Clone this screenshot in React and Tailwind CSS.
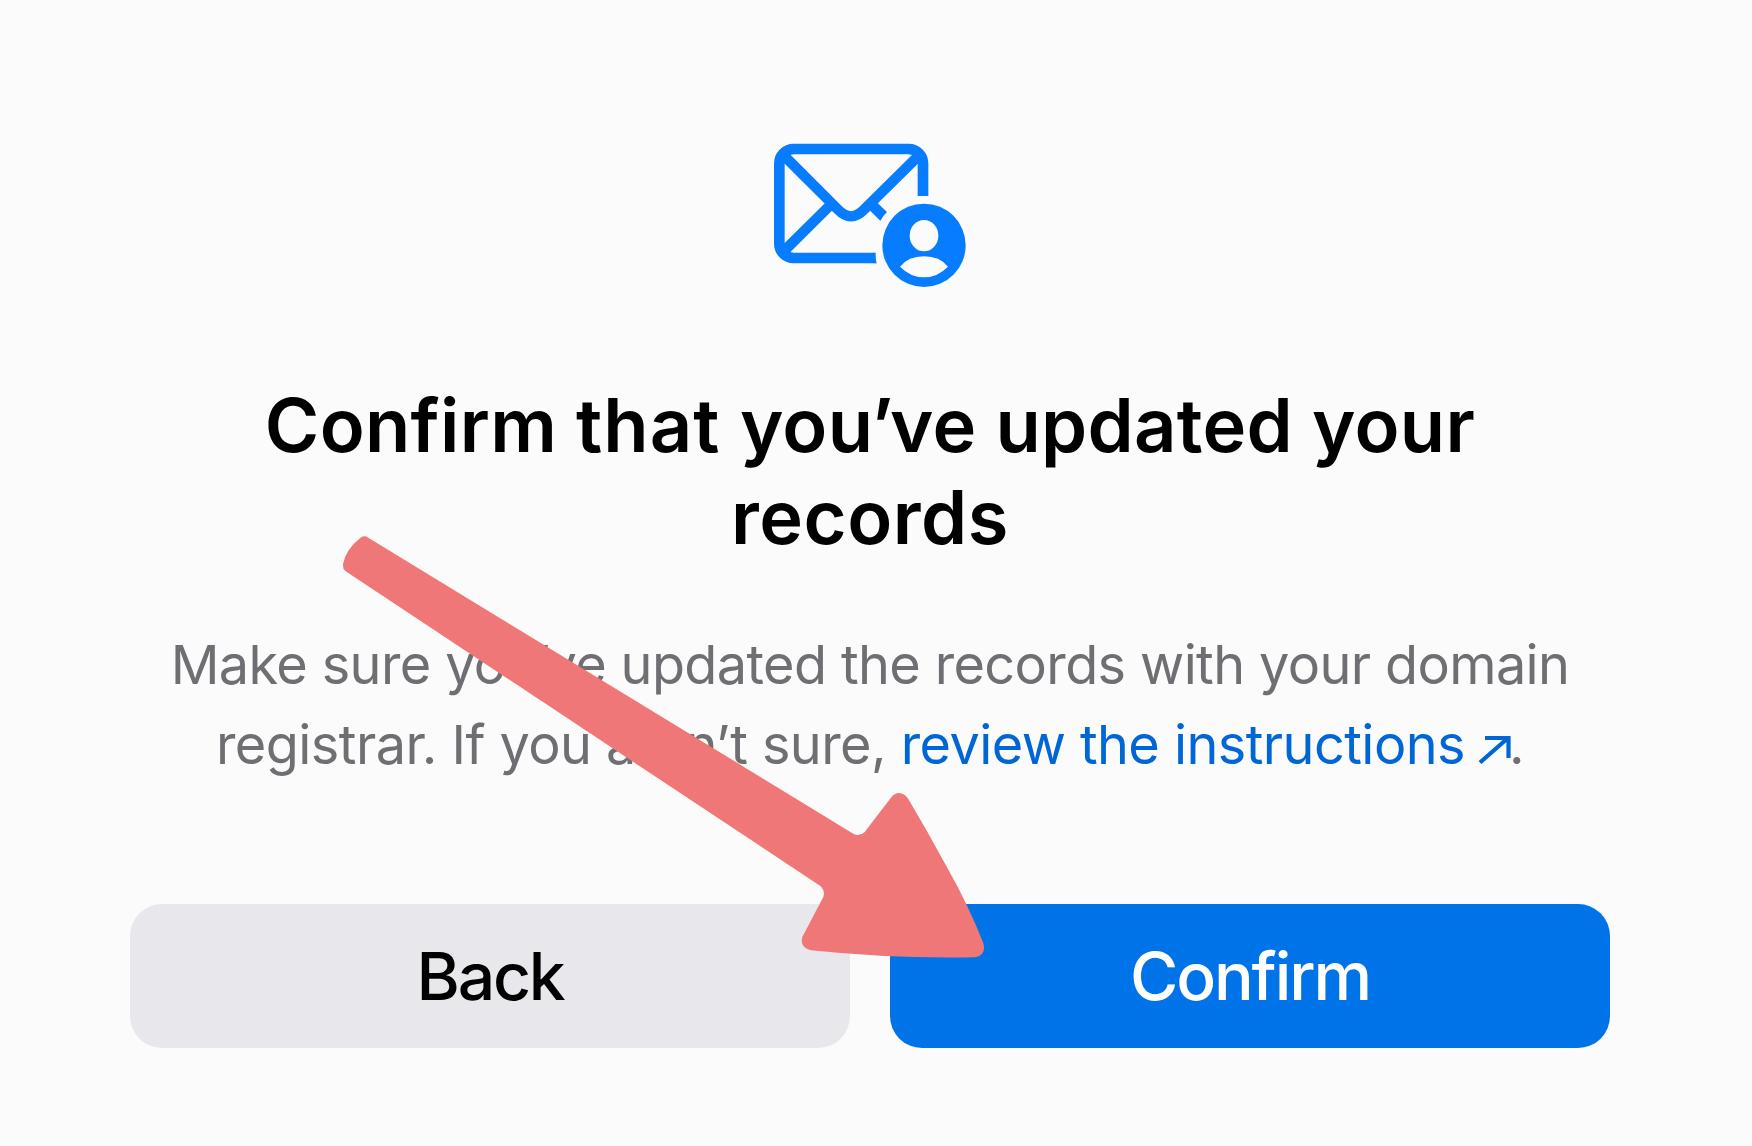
import React from 'react'

function MailUserIcon() {
    return (
        <svg className="w-[192px] h-[144px] text-[#087cff]" viewBox="42 40 576 432" fill="none" stroke="currentColor" strokeWidth={32}>
            <path d="M489 199V101a43 43 0 0 0-43-43H101a43 43 0 0 0-43 43v241a43 43 0 0 0 43 43h246" />
            <path d="M342 369l8 32h-10v-32z" fill="currentColor" stroke="none" />
            <path d="M76 82L234 240q39 40 78 0L472 82M78 358L207 230" strokeWidth={31} />
            <path d="M352 219l29 28q-12 12-20 26l-32-31z" fill="currentColor" stroke="none" />
            <circle cx="492" cy="347" r="125" fill="currentColor" stroke="none" />
            <ellipse cx="492" cy="318" rx="43" ry="47" fill="#fbfbfb" stroke="none" />
            <path d="M420 411Q445 380 492 380T564 411Q532 443 492 443T420 411z" fill="#fbfbfb" stroke="none" />
        </svg>
    )
}

function ExternalArrow() {
    return (
        <svg className="inline-block w-[34px] h-[30px] ml-[12px] mr-px align-baseline" viewBox="0 0 34 30" fill="none" stroke="currentColor" strokeWidth={4.2}>
            <path d="M8 4h23.5v20M31 4L3 28.5" />
        </svg>
    )
}

// Annotation arrow lying over the whole dialog
function PointerArrow() {
    return (
        <svg className="absolute left-0 top-0 w-[1752px] h-[1146px] pointer-events-none" viewBox="0 0 1752 1146">
            <path
                fill="#f07777"
                d="M368.3 537.7L853.3 833.7Q859 837 864.5 832.3L891.7 796.7Q895 793 899 793Q904.5 793.3 908 798.5Q928 832 946.7 866.7Q968 904 983.3 943Q986.5 955.5 975.5 957.2Q895 959 811 950.2Q799.5 947.5 802.3 937L823.3 897Q825.5 890.5 820 885.7L345.3 571Q342.7 569 343 564Q346 549 360.5 537.7Q364.5 534.8 368.3 537.7z"
            />
        </svg>
    )
}

export default function App() {
    return (
        <div className="relative w-full h-screen overflow-hidden bg-[#fbfbfb] pt-[143px] pr-3 font-['Inter',sans-serif]">
            <main className="mx-auto w-[1480px] flex flex-col items-center">
                <MailUserIcon />

                <h1 className="mt-[92px] text-[74px] leading-[92px] font-semibold tracking-[0.3px] text-center text-black whitespace-nowrap">
                    Confirm <span className="tracking-[1px]">that </span>
                    you<span className="-ml-[2px] tracking-[-3px]">’</span>ve updated your
                    <br />
                    <span className="tracking-[0.5px]">records</span>
                </h1>

                <p className="mt-[62px] text-[54px] leading-[80px] tracking-[-0.62px] text-center text-[#6e6e73] whitespace-nowrap">
                    Make sure you<span className="-ml-px tracking-[-3.5px]">’</span>ve updated the records with your domain
                    <br />
                    <span className="tracking-[-0.56px]">
                        registrar. If you aren’t sure,{' '}
                        <a href="#" className="text-[#0066d6]">
                            review the instructions
                            <ExternalArrow />
                        </a>
                        <span className="-ml-[3px]">.</span>
                    </span>
                </p>

                <div className="mt-[119px] w-full grid grid-cols-2 gap-10">
                    <button className="h-36 rounded-[32px] bg-[#e8e7ec] text-black text-[66px] font-medium tracking-[-2.2px]">
                        Back
                    </button>
                    <button className="h-36 rounded-[32px] bg-[#0073e8] text-white text-[66px] font-medium tracking-[-2.1px]">
                        Confirm
                    </button>
                </div>
            </main>

            <PointerArrow />
        </div>
    )
}
